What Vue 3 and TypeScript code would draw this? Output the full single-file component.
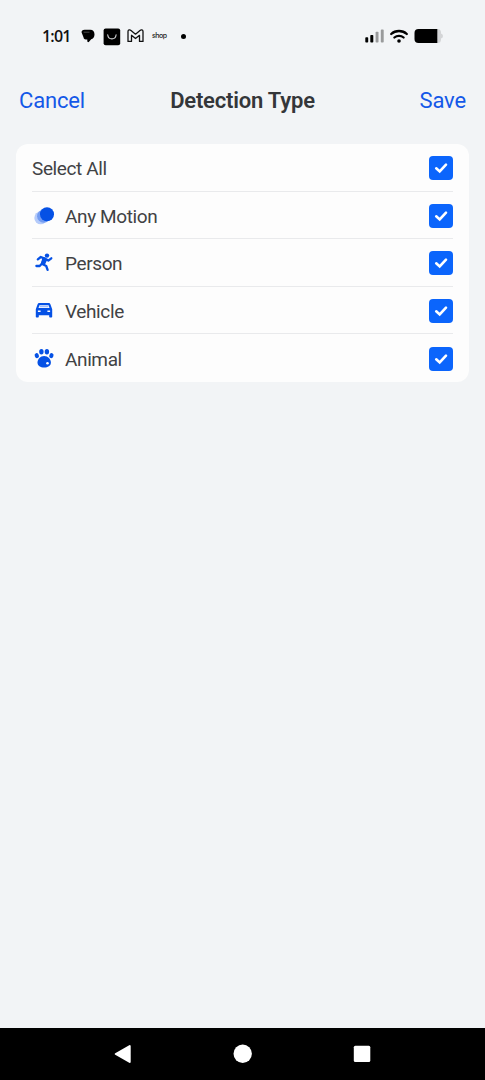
<script setup lang="ts">
import { ref, computed } from 'vue'

interface DetectionOption {
  id: string
  label: string
  checked: boolean
}

const options = ref<DetectionOption[]>([
  { id: 'motion', label: 'Any Motion', checked: true },
  { id: 'person', label: 'Person', checked: true },
  { id: 'vehicle', label: 'Vehicle', checked: true },
  { id: 'animal', label: 'Animal', checked: true },
])

const allSelected = computed<boolean>(() => options.value.every((o) => o.checked))

function toggleAll(): void {
  const next = !allSelected.value
  options.value.forEach((o) => (o.checked = next))
}
</script>

<template>
  <div class="screen">
    <div class="status">
      <span class="time">1:01</span>
      <svg class="bubble" width="14" height="14" viewBox="0 0 14 14">
        <path d="M3.600.8H9.300C12 .8 13.500 2.700 13.500 5.400C13.500 8 12 9.700 10.200 10.200L7.800 13C6.900 13.400 6.300 12.900 6.300 12V10.500H4.800C3.200 10.500 2.700 9.600 2.500 8.300L.6 3.600C.2 1.900 1.700.8 3.600.8Z" />
        <path d="M2.600 3.200H8.500" stroke="#777" stroke-width=".6" />
      </svg>
      <svg class="bag" width="18" height="18" viewBox="0 0 18 18">
        <rect x=".6" y=".6" width="16.600" height="16.600" rx="2" />
        <path d="M4.700 6.700C5.200 12.200 12.600 12.200 13.100 6.700" fill="none" stroke="#d5d6d8" stroke-width="1.100" stroke-linecap="round" />
      </svg>
      <svg class="mail" width="17" height="14" viewBox="0 0 17 14">
        <path d="M1 12.400V2.500C1 .8 2.800.5 4 1.500L8.500 5.200L13 1.500C14.200.5 16 .8 16 2.500V12.400H12.500V6.300L8.500 9.500L4.500 6.300V12.400Z" fill="none" stroke="#111" stroke-width="1.300" stroke-linejoin="round" />
      </svg>
      <span class="shop">shop</span>
      <i class="dot"></i>
      <div class="spacer"></div>
      <svg class="signal" width="20" height="14" viewBox="0 0 20 14">
        <rect x=".3" y="8.300" width="2.900" height="5.200" rx=".8" />
        <rect x="5.300" y="6" width="3" height="7.500" rx=".8" />
        <rect x="10.600" y="2.800" width="2.900" height="10.700" rx=".8" fill="#999a9b" />
        <rect x="15.800" y=".6" width="2.900" height="12.900" rx=".8" fill="#999a9b" />
      </svg>
      <svg class="wifi" width="20" height="15" viewBox="0 0 20 15">
        <path d="M2.200 5C6.500 1 13.500 1 17.800 5M5.400 8.500C8 6.200 12 6.200 14.600 8.500" fill="none" stroke="#000" stroke-width="2.300" stroke-linecap="round" />
        <circle cx="10" cy="12" r="1.800" />
      </svg>
      <svg class="battery" width="30" height="16" viewBox="0 0 30 16">
        <path d="M21 1H23.500Q27 1 27 4.500V5.500Q29 6 29 8T27 10.500V11.500Q27 15 23.500 15H21Z" fill="#d4d5d7" />
        <path d="M4.500 1H23.300V15H4.500Q.5 15 .5 11V5Q.5 1 4.500 1Z" />
      </svg>
    </div>

    <header class="header">
      <a class="action">Cancel</a>
      <h1 class="title">Detection Type</h1>
      <a class="action save">Save</a>
    </header>

    <main class="card">
      <div class="row" @click="toggleAll">
        <span class="label">Select All</span>
        <span class="check" :class="{ off: !allSelected }">
          <svg width="24" height="24" viewBox="0 0 24 24"><path d="M7.200 12.300L10.700 15.500L17 8.700" /></svg>
        </span>
      </div>
      <div v-for="option in options" :key="option.id" class="row" @click="option.checked = !option.checked">
        <svg class="icon" width="24" height="24" viewBox="0 0 24 24">
          <g v-if="option.id === 'motion'">
            <circle cx="8.700" cy="13.900" r="6.400" fill="#b5cbfa" />
            <circle cx="11.700" cy="12.200" r="6.600" fill="#729cf2" />
            <circle cx="15" cy="10.200" r="7" fill="#0551e5" />
          </g>
          <g v-else-if="option.id === 'person'">
            <circle cx="15" cy="4.600" r="2.200" />
            <path d="M5.800 8.300L8.800 6L12.800 7.600L16.300 9.600L19.300 7.300" class="limb" />
            <path d="M12.600 7.400L9.800 12.800L14.200 15L15.600 18.900M9.800 12.800L7.700 15H4.400" class="limb" />
            <path d="M10.500 6.500L15.200 8.700L12.800 14L8.800 12.800Z" />
          </g>
          <g v-else-if="option.id === 'vehicle'">
            <path fill-rule="evenodd" d="M7.200 4H16.800Q18 4 18.400 5.200L20.200 10.200V17.800Q20.200 18.600 19.400 18.600H18Q17.200 18.600 17.200 17.800V16.300H6.800V17.800Q6.800 18.600 6 18.600H4.600Q3.800 18.600 3.800 17.800V10.200L5.600 5.200Q6 4 7.200 4ZM7.400 6.300L6.500 9.100H17.500L16.600 6.300ZM5.900 11.600V13.100H8.600V11.600ZM15.400 11.600V13.100H18.100V11.600Z" />
            <path d="M7.600 7.700H16.400" stroke="#8eafff" stroke-width="1" />
          </g>
          <g v-else>
            <ellipse cx="4.800" cy="8.600" rx="2.100" ry="2.600" transform="rotate(-20 4.800 8.600)" />
            <ellipse cx="9.400" cy="4.800" rx="2.200" ry="2.700" />
            <ellipse cx="14.900" cy="4.800" rx="2.200" ry="2.700" />
            <ellipse cx="19.400" cy="8.600" rx="2.100" ry="2.600" transform="rotate(20 19.400 8.600)" />
            <path d="M12.100 8.900C16 8.900 18.900 12.300 18.900 15.400C18.900 18.600 15.800 20.400 12.100 20.400S5.500 18.600 5.500 15.400C5.500 12.300 8.300 8.900 12.100 8.900Z" />
            <circle cx="15.500" cy="16.300" r="1.300" fill="#fff" />
          </g>
        </svg>
        <span class="label">{{ option.label }}</span>
        <span class="check" :class="{ off: !option.checked }">
          <svg width="24" height="24" viewBox="0 0 24 24"><path d="M7.200 12.300L10.700 15.500L17 8.700" /></svg>
        </span>
      </div>
    </main>

    <nav class="navbar">
      <svg width="20" height="20" viewBox="0 0 20 20">
        <path d="M2.700 10L16.700 2V18Z" fill="#fff" stroke="#fff" stroke-width="2" stroke-linejoin="round" />
      </svg>
      <svg width="20" height="20" viewBox="0 0 20 20"><circle cx="9.700" cy="9.800" r="9.200" fill="#fff" /></svg>
      <svg width="20" height="20" viewBox="0 0 20 20"><rect x="1.800" y="1.700" width="16.500" height="16.300" rx="1.500" fill="#fff" /></svg>
    </nav>
  </div>
</template>

<style>
body {
  margin: 0;
  background: #f2f4f6;
}
</style>

<style scoped>
.screen {
  box-sizing: border-box;
  width: 485px;
  height: 1080px;
  display: flex;
  flex-direction: column;
  background: #f2f4f6;
  font-family: Roboto, sans-serif;
}

.status {
  height: 72px;
  box-sizing: border-box;
  padding: 0 42px;
  display: flex;
  align-items: center;
  flex-shrink: 0;
}

.time {
  width: 39px;
  font: 600 16px/20px 'Open Sans', sans-serif;
  letter-spacing: -0.8px;
  color: #111;
  white-space: nowrap;
}

.bag {
  margin-left: 8px;
  margin-top: 1px;
}

.mail {
  margin-left: 6px;
}

.shop {
  margin-left: 8px;
  width: 29px;
  font: 500 7px/10px Inter, sans-serif;
  letter-spacing: -0.5px;
  color: #222;
}

.dot {
  width: 5px;
  height: 5px;
  border-radius: 50%;
  background: #000;
}

.spacer {
  flex: 1;
}

.wifi {
  margin-left: 4px;
}

.battery {
  margin-left: 5px;
  margin-right: -1px;
}

.header {
  height: 72px;
  box-sizing: border-box;
  padding: 14px 19px 0;
  display: grid;
  grid-template-columns: 1fr auto 1fr;
  align-items: start;
  flex-shrink: 0;
}

.action {
  font-size: 22px;
  line-height: 30px;
  letter-spacing: -0.15px;
  color: #1458e8;
}

.save {
  text-align: right;
}

.title {
  margin: 0;
  font-size: 22px;
  line-height: 30px;
  font-weight: 600;
  letter-spacing: -0.2px;
  color: #343639;
}

.card {
  margin: 0 16px;
  padding: 0 16px;
  border-radius: 12px;
  background: #fdfdfd;
}

.row {
  height: 47.6px;
  box-sizing: border-box;
  padding-top: 1.6px;
  display: flex;
  align-items: center;
  border-bottom: 1px solid #e9eaec;
}

.row:last-child {
  border-bottom: 0;
}

.icon {
  margin-right: 9px;
  fill: #0551e5;
}

.limb {
  fill: none;
  stroke: #0551e5;
  stroke-width: 2.3;
  stroke-linecap: round;
  stroke-linejoin: round;
}

.label {
  flex: 1;
  padding-top: 2px;
  font-size: 19px;
  line-height: 24px;
  letter-spacing: -0.38px;
  color: #414244;
}

.check {
  width: 24px;
  height: 24px;
  border-radius: 4px;
  background: #0b65fc;
}

.check svg {
  display: block;
  fill: none;
  stroke: #fff;
  stroke-width: 2.6;
  stroke-linecap: round;
}

.check.off {
  background: #d5d8dc;
}

.navbar {
  margin-top: auto;
  height: 52px;
  padding: 0 113px;
  display: flex;
  align-items: center;
  justify-content: space-between;
  background: #000;
}
</style>
